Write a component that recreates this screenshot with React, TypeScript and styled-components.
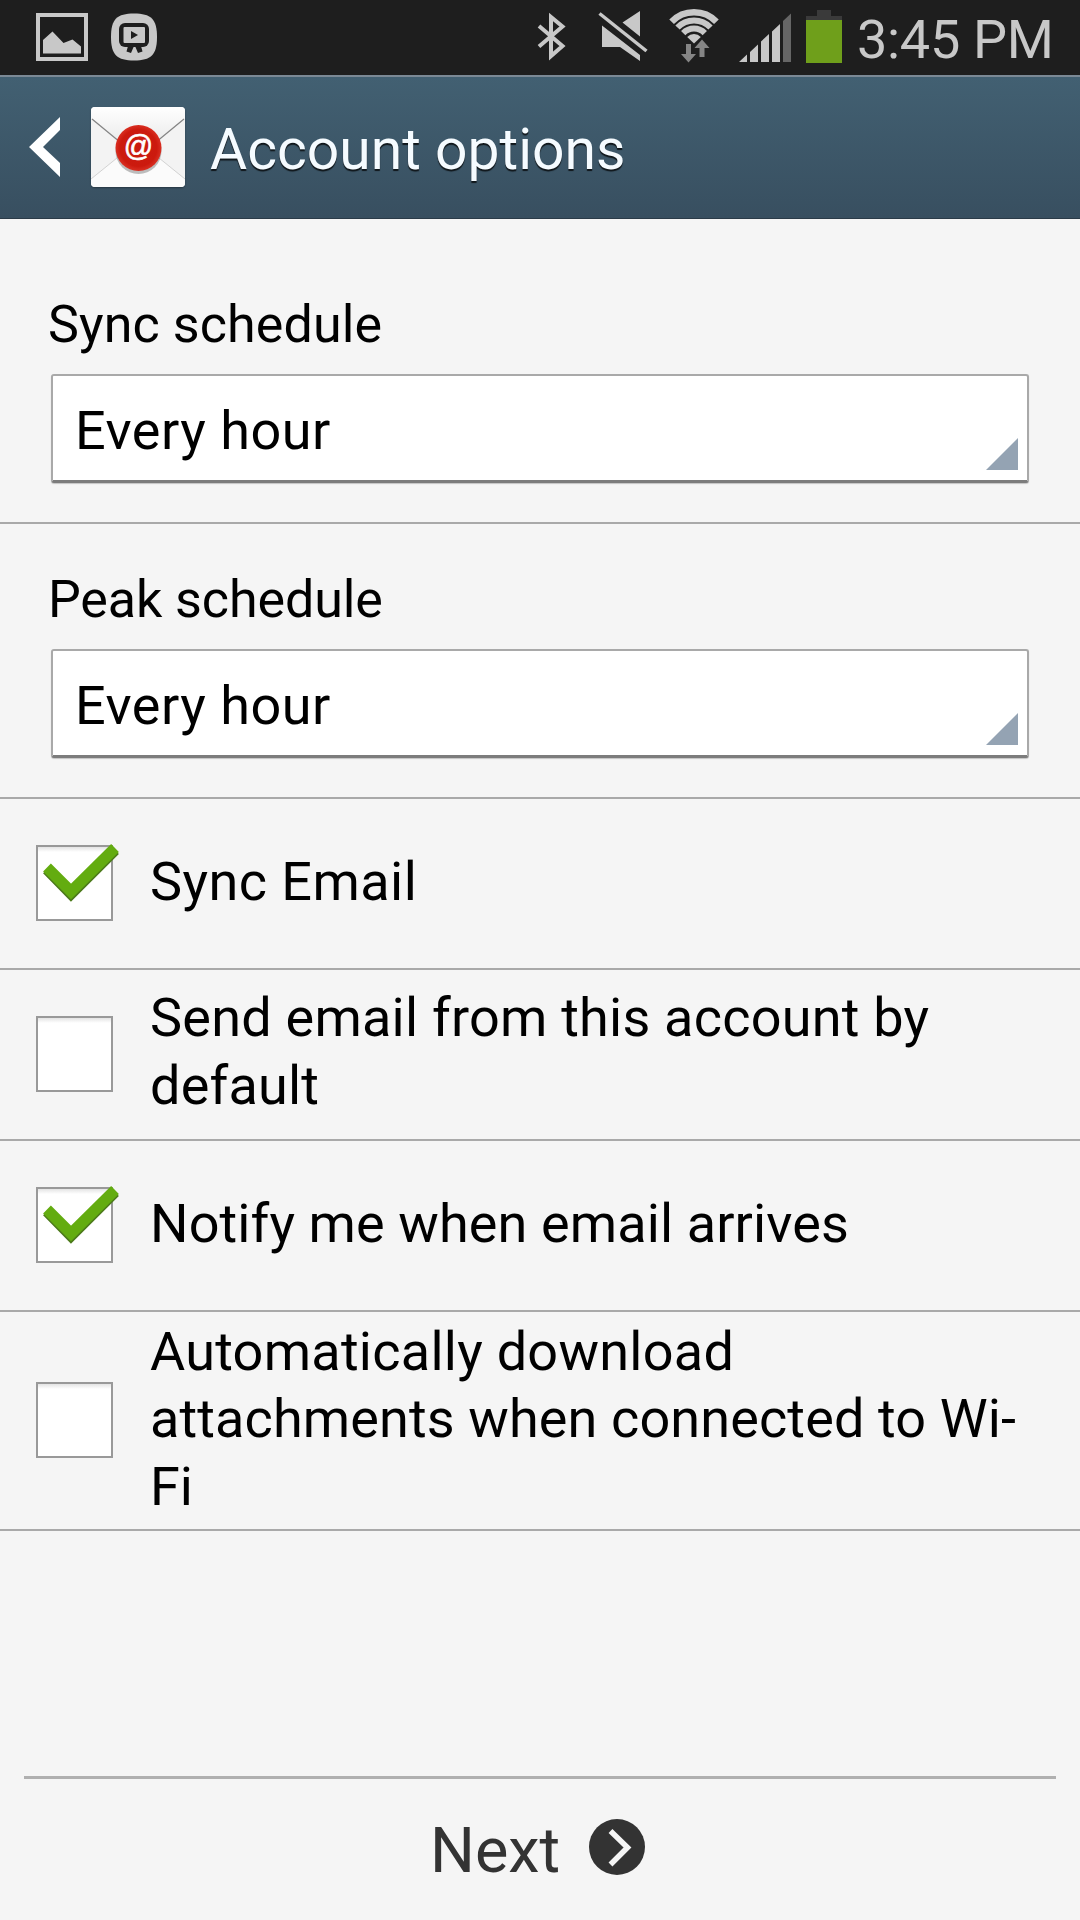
import React from 'react';
import styled, { createGlobalStyle } from 'styled-components';

const Global = createGlobalStyle`
  * { box-sizing: border-box; }
  body { margin: 0; background: #f5f5f5; font-family: Roboto, "Liberation Sans", sans-serif; }
`;

const Screen = styled.div`
  width: 1080px;
  height: 1920px;
  display: flex;
  flex-direction: column;
  background: #f5f5f5;
  color: #000;
  overflow: hidden;
`;

const StatusBar = styled.div`
  height: 75px;
  background: #1e1e1e;
  display: flex;
  justify-content: space-between;
  padding: 0 28px 0 32px;
`;

const StatusGroup = styled.div`
  display: flex;
  height: 75px;
`;

const Clock = styled.span<{ $spacing: number }>`
  padding-left: 2px;
  font-size: 54px;
  line-height: 79px;
  letter-spacing: ${(p) => p.$spacing}px;
  color: #c8c8c8;
  width: 197px;
  white-space: nowrap;
`;

const AppBar = styled.header`
  height: 144px;
  border-top: 2px solid #7b8995;
  border-bottom: 1px solid #2b3b48;
  background: linear-gradient(#426072, #384f60);
  display: flex;
  align-items: center;
  padding: 0 0 2px 28px;
`;

const MailBadge = styled.div`
  width: 94px;
  height: 80px;
  margin-left: 29px;
  display: flex;
  border-radius: 4px;
  overflow: hidden;
  box-shadow: 0 1px 2px rgba(0, 0, 0, 0.35);
`;

const Title = styled.h1`
  margin: 6px 0 0 25px;
  font-weight: 400;
  font-size: 57px;
  line-height: 68px;
  color: #f5fbff;
  text-shadow: 0 2px 1px rgba(0, 0, 0, 0.75);
  white-space: nowrap;
`;

const Field = styled.section<{ $top: number }>`
  border-bottom: 2px solid #a9a9a9;
  padding: ${(p) => p.$top}px 51px 39px;
`;

const FieldLabel = styled.div<{ $spacing: number }>`
  margin-left: -3px;
  font-size: 52px;
  line-height: 60px;
  letter-spacing: ${(p) => p.$spacing}px;
  white-space: nowrap;
`;

const Select = styled.div`
  margin-top: 19px;
  height: 109px;
  display: flex;
  justify-content: space-between;
  align-items: flex-end;
  background: #fff;
  border: 2px solid #a9a9a9;
  border-bottom: 3px solid #7c7c7c;
  border-radius: 3px;
  box-shadow: 0 1px 1px rgba(0, 0, 0, 0.2);
  padding: 0 9px 10px 22px;
`;

const SelectValue = styled.span`
  font-size: 54px;
  line-height: 64px;
  letter-spacing: 0.5px;
  margin-bottom: 7px;
`;

const Corner = styled.i`
  width: 32px;
  height: 32px;
  background: #94a3b3;
  clip-path: polygon(100% 0, 100% 100%, 0 100%);
`;

const Row = styled.label<{ $height: number }>`
  height: ${(p) => p.$height}px;
  border-bottom: 2px solid #a9a9a9;
  display: flex;
  align-items: center;
  padding-left: 36px;
`;

const Box = styled.span`
  flex: none;
  width: 77px;
  height: 76px;
  margin-bottom: 2px;
  border: 2px solid #999;
  background: linear-gradient(#e4e4e4, #fff 5px);
  display: flex;
`;

const Tick = styled.svg`
  flex: none;
  margin: -7px 0 0 -2px;
  overflow: visible;
`;

const RowText = styled.span<{ $lift: number }>`
  margin: 0 0 ${(p) => p.$lift * 2}px 37px;
  font-size: 54px;
  line-height: 67.5px;
`;

const Line = styled.span<{ $spacing: number }>`
  display: block;
  letter-spacing: ${(p) => p.$spacing}px;
  white-space: nowrap;
`;

const Footer = styled.footer`
  margin: auto 24px 0;
  height: 144px;
  border-top: 3px solid #b0b0b0;
  display: flex;
  padding: 35px 0 0 406px;
`;

const NextText = styled.span`
  width: 159px;
  font-size: 63px;
  line-height: 74px;
  color: #333;
`;

const NextIcon = styled.svg`
  margin-top: 5px;
`;

const NotificationIcons = () => (
  <svg width="130" height="75" viewBox="32 0 130 75">
    <rect x="38" y="15" width="48" height="44" fill="none" stroke="#c8c8c8" strokeWidth="4" />
    <path d="M43 53.5V40L52.5 31.5L63.5 43L72.5 39.5L81 46.5V53.5Z" fill="#c8c8c8" />
    <path d="M134 13.5C151 13.5 157 19 157 37S151 60.5 134 60.5S111 55 111 37S117 13.5 134 13.5Z" fill="#c8c8c8" />
    <rect x="119" y="23" width="30" height="24" rx="6" fill="#1e1e1e" />
    <path d="M128 46H134L131 53L126.500 51.500ZM135 46H141L142.500 51.500L138 53Z" fill="#1e1e1e" />
    <rect x="123.500" y="27" width="21.500" height="16" rx="1" fill="#c8c8c8" />
    <path d="M131 31L138 35L131 39Z" fill="#1e1e1e" />
  </svg>
);

const SystemIcons = () => (
  <svg width="320" height="75" viewBox="535 0 320 75">
    <path d="M539 26L562.500 46L551 56V17L562.500 26.500L539 46.500" fill="none" stroke="#c8c8c8" strokeWidth="4" />
    <path d="M599.500 13.500L646.500 51" stroke="#c8c8c8" strokeWidth="3.500" />
    <path d="M622.500 22.500L640 11V36.500ZM602 25.500L640 55V61L620 47H602Z" fill="#c8c8c8" />
    <g fill="none" stroke="#c8c8c8">
      <path d="M671.600 21.800A31.200 31.200 0 0 1 716.400 21.800" strokeWidth="6.500" />
      <path d="M677.500 27.500A23 23 0 0 1 710.500 27.500" strokeWidth="6" />
      <path d="M683.200 33.100A15 15 0 0 1 704.800 33.100" strokeWidth="6" />
    </g>
    <path d="M687.200 36.900A9.500 9.500 0 0 1 700.800 36.900L694 43.500Z" fill="#c8c8c8" />
    <path d="M686 44H691V54H696L688.500 62.500L681 54H686ZM702 39.500L709.500 48H704.500V57H699.500V48H694.500Z" fill="#858585" />
    <path d="M739 62L747 54.500V62ZM750 52L758 44.500V62H750ZM761 41.500L769 34V62H761ZM772 31.500L780 24V62H772Z" fill="#c8c8c8" />
    <path d="M783 21L791 13.500V62H783Z" fill="#666" />
    <path d="M817 10H831V16H842V21H806V16H817Z" fill="#3a3a3a" />
    <rect x="806" y="20" width="36" height="43" fill="#6f9f1b" />
  </svg>
);

const MailIcon = () => (
  <svg width="94" height="80" viewBox="0 0 94 80">
    <defs>
      <linearGradient id="flap" x1="0" y1="0" x2="0" y2="1">
        <stop offset="0" stopColor="#fff" />
        <stop offset="1" stopColor="#e2e2e2" />
      </linearGradient>
      <radialGradient id="seal">
        <stop offset="0" stopColor="#c91c10" />
        <stop offset="0.8" stopColor="#cc1a0e" />
        <stop offset="1" stopColor="#d92f22" />
      </radialGradient>
    </defs>
    <rect width="94" height="80" fill="#f3f3f3" />
    <path d="M0 72L47 34L94 72V80H0Z" fill="#fbfbfb" />
    <path d="M0 72L47 34L94 72" fill="none" stroke="#d2d2d2" />
    <path d="M0 0H94V11L47 50L0 11Z" fill="url(#flap)" />
    <path d="M1 12L47 50L93 12" fill="none" stroke="#858585" strokeWidth="1.300" />
    <circle cx="47.500" cy="44" r="23" fill="#000" opacity="0.25" />
    <circle cx="47.500" cy="41" r="23" fill="url(#seal)" />
    <text x="47.500" y="48.500" textAnchor="middle" fontFamily="Liberation Sans, sans-serif" fontWeight="400" fontSize="29" fill="#fff" stroke="#fff" strokeWidth="0.600">@</text>
  </svg>
);

const Check = () => (
  <Tick width="86" height="76" viewBox="0 0 86 76">
    <g fill="none" strokeWidth="11">
      <path d="M11 29.500L35 54L79 10" stroke="#4c7a1b" />
      <path d="M11 27.500L35 51.500L79 8" stroke="#63ac10" />
    </g>
  </Tick>
);

type Option = { lines: string[]; spacing: number[]; checked: boolean; height: number; lift: number };

const options: Option[] = [
  { lines: ['Sync Email'], spacing: [0.45], checked: true, height: 171, lift: 1.5 },
  { lines: ['Send email from this account by', 'default'], spacing: [0.23, 0.2], checked: false, height: 171, lift: 3 },
  { lines: ['Notify me when email arrives'], spacing: [0.11], checked: true, height: 171, lift: 1.5 },
  { lines: ['Automatically download', 'attachments when connected to Wi-', 'Fi'], spacing: [0.26, 0.12, 0], checked: false, height: 219, lift: 1.5 },
];

export default function App() {
  return (
    <Screen>
      <Global />
      <StatusBar>
        <StatusGroup>
          <NotificationIcons />
        </StatusGroup>
        <StatusGroup>
          <SystemIcons />
          <Clock $spacing={-0.3}>3:45 PM</Clock>
        </StatusGroup>
      </StatusBar>
      <AppBar>
        <svg width="34" height="60" viewBox="0 0 34 60">
          <path d="M32 0V13L15 30L32 46V60L1 30Z" fill="#fff" />
        </svg>
        <MailBadge>
          <MailIcon />
        </MailBadge>
        <Title>Account options</Title>
      </AppBar>
      <Field $top={76}>
        <FieldLabel $spacing={0.1}>Sync schedule</FieldLabel>
        <Select>
          <SelectValue>Every hour</SelectValue>
          <Corner />
        </Select>
      </Field>
      <Field $top={46}>
        <FieldLabel $spacing={-0.1}>Peak schedule</FieldLabel>
        <Select>
          <SelectValue>Every hour</SelectValue>
          <Corner />
        </Select>
      </Field>
      {options.map((o) => (
        <Row key={o.lines[0]} $height={o.height}>
          <Box>{o.checked && <Check />}</Box>
          <RowText $lift={o.lift}>
            {o.lines.map((line, i) => (
              <Line key={line} $spacing={o.spacing[i]}>{line}</Line>
            ))}
          </RowText>
        </Row>
      ))}
      <Footer>
        <NextText>Next</NextText>
        <NextIcon width="56" height="56" viewBox="0 0 56 56">
          <circle cx="28" cy="28" r="28" fill="#333" />
          <path d="M21.500 12L38.500 28.500L21.500 45.500" fill="none" stroke="#f5f5f5" strokeWidth="5.500" />
        </NextIcon>
      </Footer>
    </Screen>
  );
}
